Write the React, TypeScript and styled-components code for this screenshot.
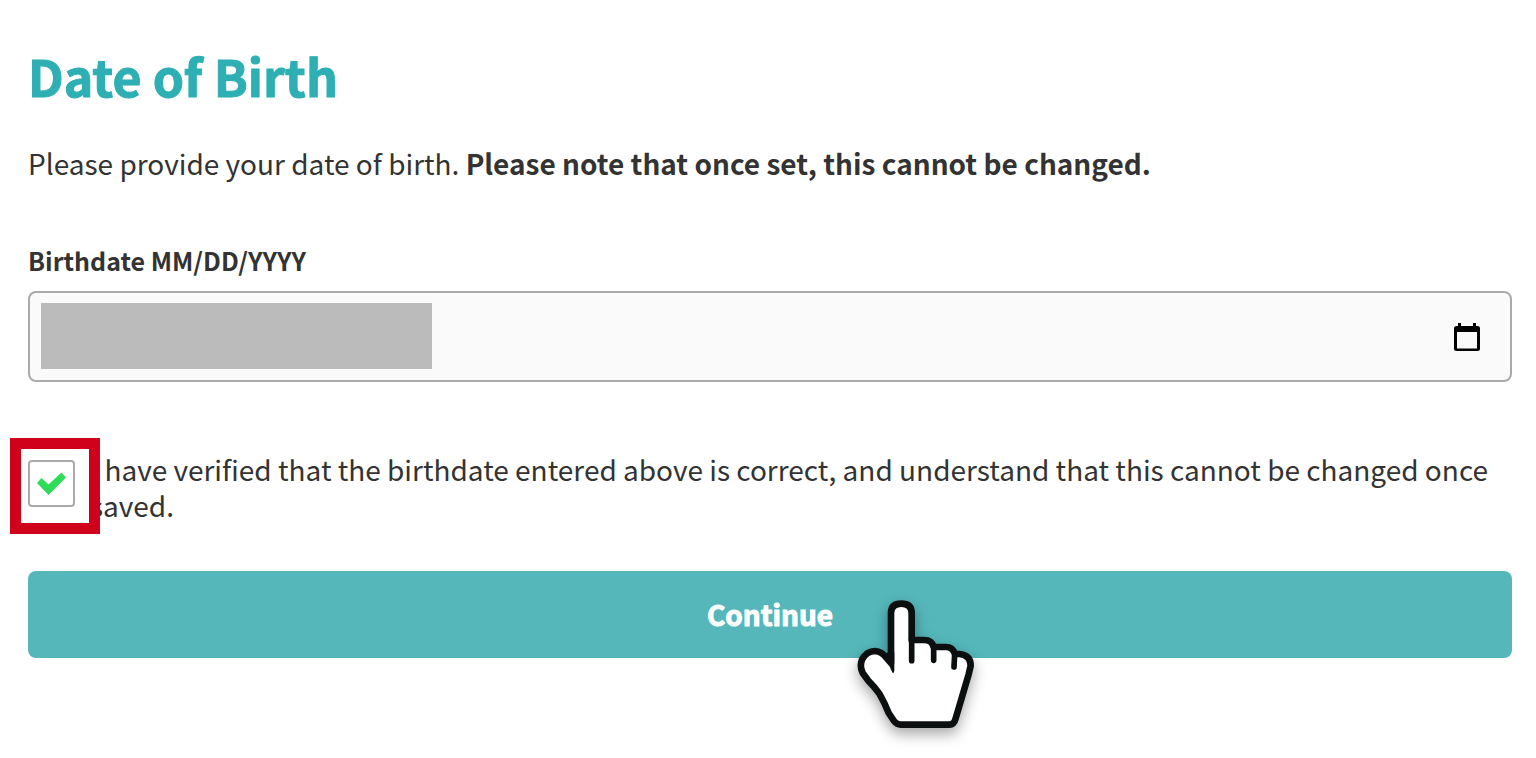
import React, { useState } from "react";
import styled, { createGlobalStyle } from "styled-components";

const GlobalStyle = createGlobalStyle`
  *, *::before, *::after { box-sizing: border-box; }
  body {
    margin: 0;
    background: #fff;
    color: #333;
    font-family: "Noto Sans CJK JP", "Noto Sans", sans-serif;
    font-size: 28px;
    line-height: 36px;
  }
`;

const Page = styled.main`
  padding: 43px 24px 100px 28px;
`;

const Title = styled.h1`
  margin: 0;
  color: #2dafb3;
  font-size: 50px;
  font-weight: 700;
  line-height: 64px;
  -webkit-text-stroke: 1px #2dafb3;
`;

const Intro = styled.p`
  margin: 38px 0 61px;
`;

const Label = styled.label`
  display: block;
  margin-bottom: 13px;
  font-size: 25px;
  font-weight: 700;
`;

const DateField = styled.div`
  position: relative;
  display: flex;
  align-items: center;
  height: 91px;
  padding: 0 30px 0 12px;
  border: 2px solid #aaa;
  border-radius: 8px;
  background: #fafafa;
`;

const DateInput = styled.input`
  flex: 1;
  min-width: 0;
  height: 66px;
  border: 0;
  outline: 0;
  background: transparent;
  color: transparent;
  font: inherit;

  &::-webkit-calendar-picker-indicator { display: none; }
`;

const Redaction = styled.span`
  position: absolute;
  top: 10px;
  left: 11px;
  width: 391px;
  height: 66px;
  background: #bbb;
`;

const IconButton = styled.button`
  display: flex;
  padding: 0;
  border: 0;
  background: none;
  color: #000;
`;

const Agreement = styled.div`
  position: relative;
  display: flex;
  align-items: flex-start;
  gap: 15px;
  margin: 69px 0 48px;
`;

const Tick = styled.span`
  position: relative;
  flex: none;
  width: 47px;
  height: 47px;
  margin-top: 9px;
`;

const Checkbox = styled.input`
  appearance: none;
  display: block;
  width: 100%;
  height: 100%;
  margin: 0;
  border: 2px solid #aaa;
  border-radius: 4px;
  background: #fff;

  & + svg { visibility: hidden; }
  &:checked + svg { visibility: visible; }
`;

const TickMark = styled.svg`
  position: absolute;
  top: 0;
  left: 0;
  pointer-events: none;
`;

const Highlight = styled.span`
  position: absolute;
  top: -13px;
  left: -18px;
  width: 90px;
  height: 96px;
  border: 11px solid #d0021b;
  pointer-events: none;
`;

const Action = styled.div`
  position: relative;
`;

const ContinueButton = styled.button`
  display: block;
  width: 100%;
  height: 87px;
  padding: 0 0 2px;
  border: 0;
  border-radius: 8px;
  background: #55b7ba;
  color: #fff;
  font: inherit;
  font-weight: 700;
  -webkit-text-stroke: 1px #fff;
`;

const Pointer = styled.svg`
  position: absolute;
  top: 18px;
  left: calc(50% + 70px);
  overflow: visible;
  pointer-events: none;
  filter: drop-shadow(0 6px 7px rgba(0, 0, 0, 0.35));
`;

export default function App() {
  const [verified, setVerified] = useState(true);

  return (
    <Page>
      <GlobalStyle />
      <Title>Date of Birth</Title>
      <Intro>
        Please provide your date of birth.{" "}
        <strong>Please note that once set, this cannot be changed.</strong>
      </Intro>

      <Label htmlFor="birthdate">Birthdate MM/DD/YYYY</Label>
      <DateField>
        <DateInput id="birthdate" type="date" />
        <Redaction />
        <IconButton type="button" aria-label="Open calendar">
          <svg width="26" height="28" viewBox="0 0 26 28">
            <path
              fill="currentColor"
              fillRule="evenodd"
              d="M4 0h3v3h12V0h3v3h1.500a2.500 2.500 0 0 1 2.500 2.500v20a2.500 2.500 0 0 1-2.500 2.500h-21A2.500 2.500 0 0 1 0 25.500v-20A2.500 2.500 0 0 1 2.500 3H4zM3 9v16.500h20V9z"
            />
          </svg>
        </IconButton>
      </DateField>

      <Agreement>
        <Tick>
          <Checkbox
            id="verified"
            type="checkbox"
            checked={verified}
            onChange={(e) => setVerified(e.target.checked)}
          />
          <TickMark width="47" height="47" viewBox="0 0 47 47">
            <path fill="#2fdc59" d="M9 23l4.500-5 7 6.500L33.500 12.500l4.500 5L20.500 35z" />
          </TickMark>
        </Tick>
        <label htmlFor="verified">
          I have verified that the birthdate entered above is correct, and understand that this
          cannot be changed once saved.
        </label>
        <Highlight />
      </Agreement>

      <Action>
        <ContinueButton type="button">Continue</ContinueButton>
        <Pointer width="160" height="160" viewBox="0 0 480 480">
          <path
            fill="#fff"
            stroke="#0c0f10"
            strokeWidth="20"
            strokeLinejoin="round"
            d="M153 222V72Q153 44 184 44Q215 44 215 72V153H252Q276 153 281 174H318Q338 174 345 195H358Q392 198 392 230L386 256L347 388Q342 407 328 407H182Q171 407 162 396L146 372Q134 342 118 314Q104 294 84 274L68 252Q58 232 66 212Q80 186 105 186Q125 188 138 205Z"
          />
          <path
            fill="none"
            stroke="#0c0f10"
            strokeWidth="17"
            strokeLinecap="round"
            d="M215 150V215M281 172V214M344 195L342 234"
          />
          <path fill="#0c0f10" d="M143 190H163V244Q161 260 155 246Q146 222 130 205Z" />
        </Pointer>
      </Action>
    </Page>
  );
}
